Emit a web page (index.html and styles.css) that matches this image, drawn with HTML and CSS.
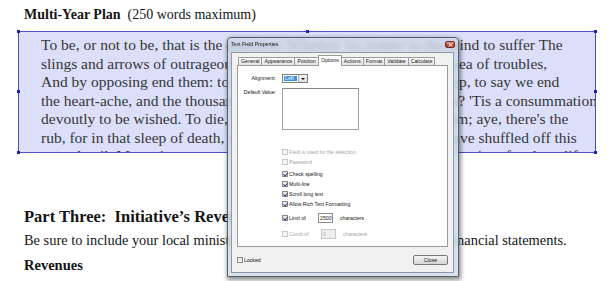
FILE: index.html
```html
<!DOCTYPE html>
<html lang="en">
<head>
<meta charset="utf-8">
<title>Multi-Year Plan</title>
<link rel="stylesheet" href="styles.css">
</head>
<body>
<div class="page">
  <h2 class="plan-title"><b>Multi-Year Plan</b>&nbsp; (250 words maximum)</h2>
  <div class="field">
    <div class="field-clip">
      <p class="field-text">To be, or not to be, that is the question: Whether 'tis nobler in the mind to suffer The<br>slings and arrows of outrageous fortune, Or to take arms against a sea of troubles,<br>And by opposing end them: to die, to sleep; No more; and by a sleep, to say we end<br>the heart-ache, and the thousand natural shocks That flesh is heir to? 'Tis a consummation<br>devoutly to be wished. To die, to sleep; To sleep, perchance to dream; aye, there's the<br>rub, for in that sleep of death, what dreams may come, When we have shuffled off this<br>mortal coil, Must give us pause—there's the respect That makes calamity of so long life.</p>
    </div>
    <span class="handle h-tl"></span>
    <span class="handle h-tm"></span>
    <span class="handle h-tr"></span>
    <span class="handle h-ml"></span>
    <span class="handle h-mr"></span>
    <span class="handle h-bl"></span>
    <span class="handle h-bm"></span>
    <span class="handle h-br"></span>
  </div>
  <h3 class="part-title">Part Three:&nbsp; Initiative’s Revenues and Expenses</h3>
  <p class="note">Be sure to include your local ministry's two most recent year-end audited financial statements.</p>
  <h4 class="sub-title">Revenues</h4>
</div>

<div class="dialog">
  <div class="titlebar">
    <span class="title">Text Field Properties</span>
    <span class="close-x"><svg width="5" height="4" viewBox="0 0 5 4"><path d="M0.5 0.3 L4.5 3.7 M4.5 0.3 L0.5 3.7" stroke="#fff" stroke-width="1"/></svg></span>
  </div>
  <div class="client">
    <div class="tabs">
      <span class="tab">General</span>
      <span class="tab">Appearance</span>
      <span class="tab">Position</span>
      <span class="tab active">Options</span>
      <span class="tab">Actions</span>
      <span class="tab">Format</span>
      <span class="tab">Validate</span>
      <span class="tab">Calculate</span>
    </div>
    <div class="panel">
      <div class="form-row">
        <span class="lbl">Alignment:</span>
        <span class="select"><span class="sel-val">Left</span><span class="sel-arrow"></span></span>
      </div>
      <div class="form-row area-row">
        <span class="lbl">Default Value:</span>
        <span class="textarea"></span>
      </div>
      <div class="checks">
        <div class="check off"><span class="cb"></span>Field is used for file selection</div>
        <div class="check off"><span class="cb"></span>Password</div>
        <div class="check gap-sm"><span class="cb on"></span>Check spelling</div>
        <div class="check"><span class="cb on"></span>Multi-line</div>
        <div class="check"><span class="cb on"></span>Scroll long text</div>
        <div class="check"><span class="cb on"></span>Allow Rich Text Formatting</div>
        <div class="check gap-md"><span class="cb on"></span><span class="count-lbl">Limit of</span><span class="num">2500</span><span class="unit">characters</span></div>
        <div class="check off gap-lg"><span class="cb"></span><span class="count-lbl wide">Comb of</span><span class="num">0</span><span class="unit">characters</span></div>
      </div>
    </div>
    <div class="footer">
      <div class="check"><span class="cb"></span>Locked</div>
      <span class="btn">Close</span>
    </div>
  </div>
</div>
</body>
</html>
```
FILE: styles.css
```css
* { box-sizing: border-box; margin: 0; padding: 0; }
html, body { width: 610px; height: 281px; overflow: hidden; background: #fff; }
body { font-family: "Liberation Serif", serif; color: #141414; }

.page { padding: 6px 14px 0 18px; }

.plan-title { font-size: 14px; line-height: 18px; font-weight: normal; padding-left: 6px; white-space: nowrap; }
.plan-title b { font-weight: bold; }

.field { position: relative; margin-top: 7px; width: 578px; height: 122px; border: 1px solid #4b50c2; background: #dcdff9; }
.field-clip { height: 100%; overflow: hidden; padding: 4px 0 0 22px; }
.field-text { font-size: 15.5px; line-height: 18.5px; color: #363636; white-space: nowrap; }

.handle { position: absolute; width: 3px; height: 3px; background: #2020b0; }
.h-tl { left: -2px; top: -2px; }
.h-tm { left: 287px; top: -2px; }
.h-tr { right: -2px; top: -2px; }
.h-ml { left: -2px; top: 58px; }
.h-mr { right: -2px; top: 58px; }
.h-bl { left: -2px; bottom: -2px; }
.h-bm { left: 287px; bottom: -2px; }
.h-br { right: -2px; bottom: -2px; }

.part-title { margin-top: 54px; font-size: 16.5px; line-height: 20px; font-weight: bold; padding-left: 6px; white-space: nowrap; }
.note { margin-top: 4px; font-size: 14.4px; line-height: 18px; padding-left: 6px; white-space: nowrap; }
.sub-title { margin-top: 7px; font-size: 14.5px; line-height: 18px; font-weight: bold; padding-left: 6px; }

/* dialog (Windows 7 style) */
.dialog {
  position: absolute; left: 227px; top: 37px; width: 232px; height: 240px;
  display: flex; flex-direction: column;
  padding: 0 4px 3px 3px;
  border: 1px solid #56616e; border-radius: 4px 4px 0 0;
  background: rgba(206, 217, 231, 0.8);
  backdrop-filter: blur(2.6px);
  box-shadow: 1px 2px 4px 1px rgba(0, 0, 0, 0.45);
  font-family: "Liberation Sans", sans-serif; font-size: 5.2px; color: #151515;
}
.titlebar { height: 14px; display: flex; justify-content: space-between; align-items: flex-start; }
.title { margin-top: 3px; line-height: 7px; }
.close-x {
  margin: 3px -1px 0 0; width: 10px; height: 7px;
  display: flex; align-items: center; justify-content: center;
  border: 1px solid #6e2a1f; border-radius: 2px;
  background: linear-gradient(#e9a493, #c8503a 50%, #b2341e);
}
.close-x svg { display: block; }

.client { flex: 1; display: flex; flex-direction: column; padding: 2px 5px 0 5px; background: #f1f1f1; border: 1px solid #8e9aa7; }

.tabs { display: flex; align-items: flex-end; height: 10px; padding-left: 1px; }
.tab {
  height: 8px; line-height: 7px; padding: 0 2px; margin-right: -1px;
  border: 1px solid #9b9b9b; border-bottom: none;
  background: linear-gradient(#fbfbfb, #e4e4e4);
}
.tab.active { height: 11px; margin-bottom: -1px; line-height: 9px; background: #fff; position: relative; z-index: 1; }

.panel { height: 182px; padding-top: 8px; background: #fff; border: 1px solid #9a9a9a; }

.form-row { display: flex; gap: 6px; height: 9px; }
.lbl { width: 38px; text-align: right; line-height: 9px; }
.select { width: 26px; height: 9px; display: flex; border: 1px solid #7c7c7c; background: #fff; }
.sel-val { flex: 1; margin: 1px; padding-left: 1px; line-height: 5px; background: #3c8ee6; color: #fff; }
.sel-arrow { width: 9px; border-left: 1px solid #b5b5b5; background: linear-gradient(#f7f7f7, #dedede); display: flex; align-items: center; justify-content: center; }
.sel-arrow::after { content: ""; border-left: 2px solid transparent; border-right: 2px solid transparent; border-top: 2px solid #111; }

.area-row { margin-top: 5px; height: 42px; }
.textarea { width: 77px; height: 42px; border: 1px solid #a4a4a4; border-top-color: #8a8a8a; background: #fff; }

.checks { margin-top: 17px; padding-left: 44px; }
.check { display: flex; align-items: center; gap: 1px; height: 10px; white-space: nowrap; }
.check.off { color: #a6a6a6; }
.gap-sm { margin-top: 2px; }
.gap-md { margin-top: 4px; }
.gap-lg { margin-top: 6px; }

.cb { position: relative; flex: none; width: 6px; height: 6px; border: 1px solid #8b8b8b; background: linear-gradient(#e2e2e2, #fbfbfb); }
.check.off .cb { border-color: #c8c8c8; background: #f6f6f6; }
.cb.on::after {
  content: ""; position: absolute; left: 1.3px; top: -0.2px; width: 1.6px; height: 3px;
  border: solid #2e4079; border-width: 0 1px 1px 0; transform: rotate(40deg);
}

.count-lbl { width: 28px; }
.count-lbl.wide { width: 31px; }
.num { width: 15px; height: 10px; line-height: 8px; padding-left: 1px; border: 1px solid #8c8c8c; background: #fff; color: #151515; }
.check.off .num { border-color: #c9c9c9; background: #efefef; color: #b0b0b0; }
.unit { margin-left: 6px; }

.footer { margin-top: 8px; height: 10px; display: flex; justify-content: space-between; align-items: center; }
.btn {
  width: 35px; height: 10px; line-height: 8px; text-align: center;
  border: 1px solid #777; border-radius: 2px;
  background: linear-gradient(#f4f4f4, #e4e4e4 50%, #d6d6d6);
}
```
